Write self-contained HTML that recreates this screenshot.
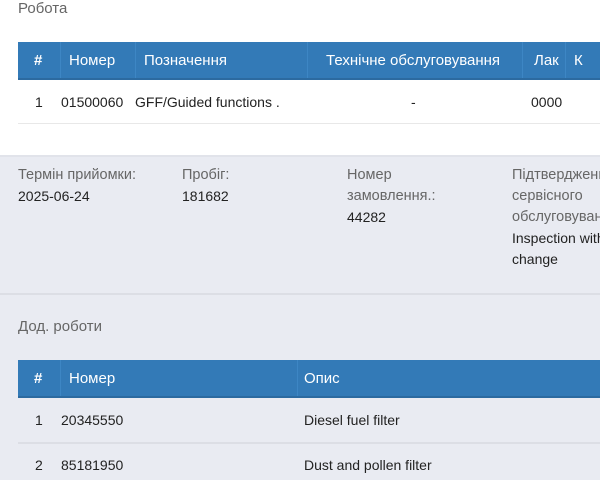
<!DOCTYPE html>
<html><head><meta charset="utf-8"><style>
*{margin:0;padding:0;box-sizing:border-box}
body{width:600px;height:480px;overflow:hidden;background:#fff;font-family:"Liberation Sans","DejaVu Sans",sans-serif;position:relative;color:#222}
.a{position:absolute;white-space:nowrap}
.lt{color:#666;font-size:15px}
.hd{position:absolute;left:18px;width:600px;height:38px;background:#337ab7;border-bottom:2px solid #2c6aa0}
.hd span{position:absolute;top:10px;color:#fff;font-size:15px}
.hd i{position:absolute;top:0;bottom:0;width:1px;background:#3d86c4}
.t{font-size:14px;color:#222}
.b{font-size:14px;color:#222;line-height:21px}
.g{font-size:14.5px;color:#666;line-height:21px}
</style></head><body>
<div class="a lt" style="left:18px;top:0px">Робота</div>
<div class="hd" style="top:42px">
<span style="left:16px;font-weight:bold">#</span><i style="left:42px"></i>
<span style="left:51px">Номер</span><i style="left:117px"></i>
<span style="left:126px">Позначення</span><i style="left:289px"></i>
<span style="left:308px">Технічне обслуговування</span><i style="left:504px"></i>
<span style="left:516px">Лак</span><i style="left:547px"></i>
<span style="left:556px">К</span>
</div>
<div class="a t" style="left:35px;top:94px">1</div>
<div class="a t" style="left:61px;top:94px">01500060</div>
<div class="a t" style="left:135px;top:94px">GFF/Guided functions .</div>
<div class="a t" style="left:411px;top:94px">-</div>
<div class="a t" style="left:531px;top:94px">0000</div>
<div class="a" style="left:18px;top:123px;width:582px;height:1px;background:#e8e8e8"></div>
<div class="a" style="left:0;top:155px;width:600px;height:325px;background:#e9ebf2"></div>
<div class="a" style="left:0;top:155px;width:600px;height:2px;background:#e1e3ea"></div>
<div class="a" style="left:0;top:293px;width:600px;height:2px;background:#dcdee5"></div>
<div class="a" style="left:18px;top:165px"><div class="g">Термін прийомки:</div><div class="b">2025-06-24</div></div>
<div class="a" style="left:182px;top:165px"><div class="g">Пробіг:</div><div class="b">181682</div></div>
<div class="a" style="left:347px;top:165px"><div class="g">Номер</div><div class="g">замовлення.:</div><div class="b">44282</div></div>
<div class="a" style="left:512px;top:165px"><div class="g">Підтвердження</div><div class="g">сервісного</div><div class="g">обслуговування</div><div class="b">Inspection with oil</div><div class="b">change</div></div>
<div class="a lt" style="left:18px;top:318px">Дод. роботи</div>
<div class="hd" style="top:360px">
<span style="left:16px;font-weight:bold">#</span><i style="left:42px"></i>
<span style="left:51px">Номер</span><i style="left:279px"></i>
<span style="left:286px">Опис</span>
</div>
<div class="a t" style="left:35px;top:412px">1</div>
<div class="a t" style="left:61px;top:412px">20345550</div>
<div class="a t" style="left:304px;top:412px">Diesel fuel filter</div>
<div class="a" style="left:18px;top:442px;width:582px;height:2px;background:#dcdee5"></div>
<div class="a t" style="left:35px;top:457px">2</div>
<div class="a t" style="left:61px;top:457px">85181950</div>
<div class="a t" style="left:304px;top:457px">Dust and pollen filter</div>
</body></html>
